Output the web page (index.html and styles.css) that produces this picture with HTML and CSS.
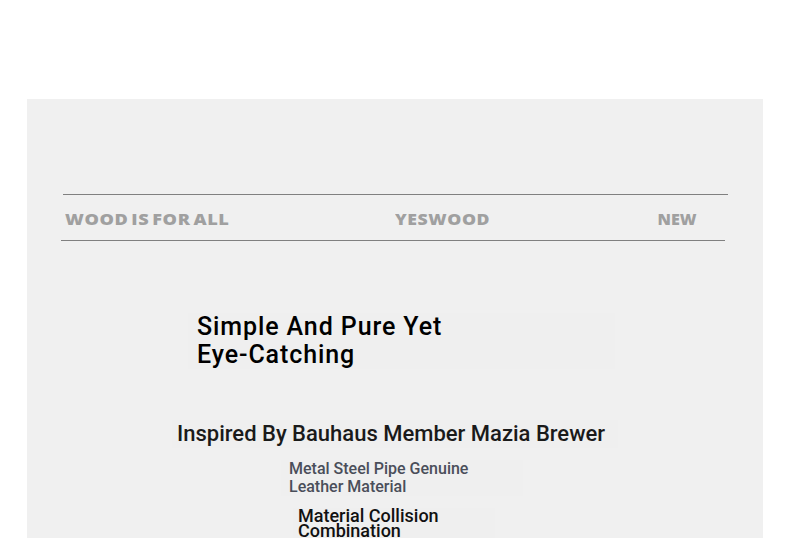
FILE: index.html
```html
<!DOCTYPE html>
<html lang="en">
<head>
<meta charset="utf-8">
<title>Yeswood</title>
<link rel="stylesheet" href="styles.css">
</head>
<body>
<main class="panel">
  <div class="rule rule-top"></div>
  <div class="tagline">
    <span class="tag tag-left">WOOD IS FOR ALL</span>
    <span class="tag tag-mid">YESWOOD</span>
    <span class="tag tag-right">NEW</span>
  </div>
  <div class="rule rule-bottom"></div>

  <section class="content">
    <h1 class="title">Simple And Pure Yet<br>Eye-Catching</h1>
    <h2 class="subtitle">Inspired By Bauhaus Member Mazia Brewer</h2>
    <p class="material">Metal Steel Pipe Genuine<br>Leather Material</p>
    <h3 class="combo">Material Collision<br>Combination</h3>
  </section>
</main>
</body>
</html>
```
FILE: styles.css
```css
html, body {
  margin: 0;
  padding: 0;
  background: #ffffff;
  height: 100%;
  overflow: hidden;
}
body {
  font-family: Roboto, "Liberation Sans", sans-serif;
}
.panel {
  margin: 99px 27px 0 27px;
  background: #f0f0f0;
  height: 600px;
  padding-top: 95px;
  box-sizing: border-box;
}
.rule {
  height: 0;
  border-top: 1px solid #808080;
}
.rule-top {
  margin-left: 36px;
  width: 665px;
}
.rule-bottom {
  margin-left: 34px;
  width: 664px;
}
.tagline {
  display: flex;
  align-items: center;
  height: 45px;
  padding-top: 3px;
  box-sizing: border-box;
  margin-left: 38px;
  width: 632px;
}
.tag {
  display: inline-block;
  font-family: "Open Sans", sans-serif;
  font-weight: 800;
  font-size: 15.5px;
  line-height: 18px;
  color: #a0a0a0;
  letter-spacing: 0.5px;
  word-spacing: -2px;
  transform: scaleX(1.14);
  transform-origin: left center;
}
.tag-left {
  transform: scaleX(1.17);
}
.tag-mid {
  margin-left: 189px;
}
.tag-right {
  margin-left: auto;
  letter-spacing: 0;
  transform: scaleX(1.04);
  transform-origin: right center;
}
.content {
  display: flex;
  flex-direction: column;
}
.title {
  margin: 72px 0 0 161px;
  width: 427px;
  padding-left: 9px;
  box-sizing: border-box;
  font-size: 25px;
  line-height: 28px;
  font-weight: 500;
  letter-spacing: 0.9px;
  color: #000;
  background: #efefef;
}
.subtitle {
  margin: 51px 0 0 145px;
  width: 446px;
  padding-left: 5px;
  box-sizing: border-box;
  font-size: 22px;
  line-height: 28px;
  font-weight: 500;
  letter-spacing: 0;
  color: #1a1a1a;
  background: #efefef;
}
.material {
  margin: 12px 0 0 254px;
  width: 242px;
  padding-left: 8px;
  box-sizing: border-box;
  font-size: 16px;
  line-height: 18px;
  font-weight: 500;
  letter-spacing: 0;
  color: #4a4e5a;
  background: #efefef;
}
.combo {
  margin: 12px 0 0 266px;
  width: 202px;
  padding-left: 5px;
  box-sizing: border-box;
  font-size: 18px;
  line-height: 15px;
  font-weight: 500;
  color: #111;
  background: #efefef;
}
```
